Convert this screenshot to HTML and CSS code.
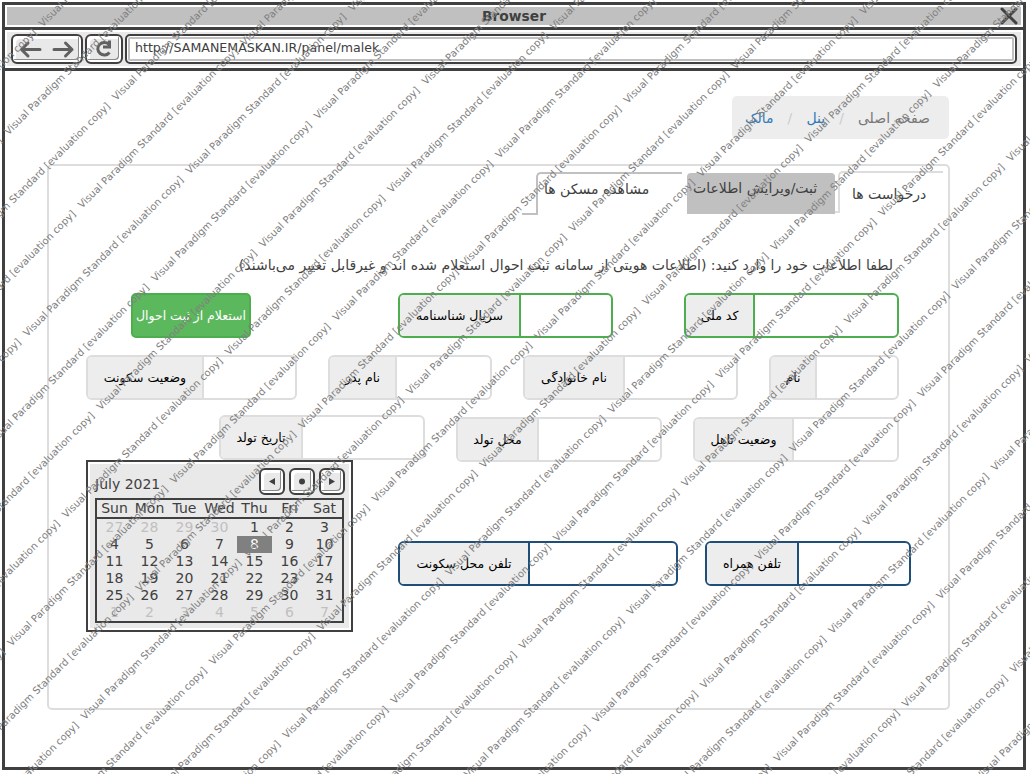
FILE: index.html
```
<!DOCTYPE html>
<html lang="fa">
<head>
<meta charset="utf-8">
<title>Browser</title>
<link rel="stylesheet" href="styles.css">
</head>
<body>
<div class="window">
  <header class="titlebar">
    <span class="title">Browser</span>
    <svg class="close" width="20" height="18" viewBox="0 0 20 18"><path d="M3 2 17 16M17 2 3 16"/></svg>
  </header>
  <div class="toolbar">
    <div class="button nav">
      <svg width="68" height="26" viewBox="0 0 68 26"><path d="M27 13.500H9M15 7 8.500 13.500l6.500 6.500M41 13.500H59M52.500 7 59 13.500l-6.500 6.500"/></svg>
    </div>
    <div class="button reload">
      <svg width="34" height="26" viewBox="0 0 34 26"><path d="M22 8.500A6.500 6.200 0 1 0 22.500 16.500M22.500 4.500v6.500H16"/></svg>
    </div>
    <div class="address"><span>http://SAMANEMASKAN.IR/panel/malek</span></div>
  </div>
  <main class="page">
    <nav class="crumbs">
      <a class="link">مالک</a><i>/</i><a class="link">پنل</a><i>/</i><a class="current">صفحه اصلی</a>
    </nav>
    <section class="panel">
      <div class="tabs">
        <span class="foot"></span>
        <div class="tab houses"><span>مشاهده مسکن ها</span></div>
        <div class="tab active"><span>ثبت/ویرایش اطلاعات</span></div>
        <span class="foot light"></span>
        <div class="tab requests"><span>درخواست ها</span></div>
      </div>
      <p class="hint" dir="rtl"><span>لطفا اطلاعات خود را وارد کنید: (اطلاعات هویتی از سامانه ثبت احوال استعلام شده اند و غیرقابل تغییر می‌باشند)</span></p>
      <div class="row identity">
        <button class="inquiry"><span>استعلام از ثبت احوال</span></button>
        <div class="field green serial"><label>سریال شناسنامه</label></div>
        <div class="field green code"><label>کد ملی</label></div>
      </div>
      <div class="row names">
        <div class="field residence"><label>وضعیت سکونت</label></div>
        <div class="field father"><label>نام پدر</label></div>
        <div class="field family"><label>نام خانوادگی</label></div>
        <div class="field first"><label>نام</label></div>
      </div>
      <div class="row birth">
        <div class="field date"><label>تاریخ تولد</label></div>
        <div class="field place"><label>محل تولد</label></div>
        <div class="field marital"><label>وضعیت تاهل</label></div>
      </div>
      <div class="row phones">
        <div class="field blue home"><label>تلفن محل سکونت</label></div>
        <div class="field blue mobile"><label>تلفن همراه</label></div>
      </div>
    </section>
  </main>
</div>
<div class="calendar">
  <div class="month">
    <span>July 2021</span>
    <div class="button step"><svg width="22" height="23" viewBox="0 0 22 23"><path d="M14 8v7L8 11.500z"/></svg></div>
    <div class="button step"><svg width="22" height="23" viewBox="0 0 22 23"><circle cx="11" cy="11.500" r="3"/></svg></div>
    <div class="button step"><svg width="22" height="23" viewBox="0 0 22 23"><path d="M8 8v7l6-3.500z"/></svg></div>
  </div>
  <div class="sheet">
    <div class="days"><b>Sun</b><b>Mon</b><b>Tue</b><b>Wed</b><b>Thu</b><b>Fri</b><b>Sat</b></div>
    <div class="dates">
      <s>27</s><s>28</s><s>29</s><s>30</s><b>1</b><b>2</b><b>3</b>
      <b>4</b><b>5</b><b>6</b><b>7</b><b class="today">8</b><b>9</b><b>10</b>
      <b>11</b><b>12</b><b>13</b><b>14</b><b>15</b><b>16</b><b>17</b>
      <b>18</b><b>19</b><b>20</b><b>21</b><b>22</b><b>23</b><b>24</b>
      <b>25</b><b>26</b><b>27</b><b>28</b><b>29</b><b>30</b><b>31</b>
      <s>1</s><s>2</s><s>3</s><s>4</s><s>5</s><s>6</s><s>7</s>
    </div>
  </div>
</div>
<svg class="watermark" width="1030" height="774"><g id="marks" transform="translate(42.8 27.5) rotate(-45)"></g></svg>
<script src="watermark.js"></script>
</body>
</html>
```
FILE: styles.css
```
* { box-sizing: border-box; }
body {
  margin: 0;
  width: 1030px;
  height: 774px;
  overflow: hidden;
  background: #fff;
  color: #404040;
  font-family: "DejaVu Sans", sans-serif;
  font-size: 14px;
}
svg { display: block; }
.window {
  width: 1024px;
  height: 768px;
  margin: 2px 0 0 2px;
  border: 3px solid #404040;
  display: flex;
  flex-direction: column;
}
.titlebar {
  flex: none;
  height: 25px;
  border-bottom: 3px solid #404040;
  background: #c0c0c0;
  box-shadow: inset 0 0 0 2px #fff;
  display: grid;
  grid-template-columns: 1fr 20px;
  align-items: center;
  padding: 0 4px 0 0;
}
.title {
  text-align: center;
  font-size: 13.8px;
  font-weight: bold;
  line-height: 18px;
  padding-left: 24px;
}
.close path { stroke: #404040; stroke-width: 3; stroke-linecap: round; fill: none; }
.toolbar {
  flex: none;
  height: 41px;
  border-bottom: 3px solid #404040;
  background: #e9e9e9;
  box-shadow: inset 0 0 0 2px #fff;
  padding: 4px 6px;
  display: flex;
  gap: 2px;
}
.button {
  height: 30px;
  border: 2px solid #404040;
  border-radius: 6px;
  background: #e9e9e9;
  box-shadow: inset 1px 1px 0 0 #fff, inset -2px -2px 0 0 #fff, inset -3px -3px 0 0 #8a8a8a, inset 3px 3px 0 0 #fff;
}
.button path { fill: none; stroke: #606060; stroke-width: 3; stroke-linecap: round; stroke-linejoin: round; }
.nav { width: 72px; }
.reload { width: 38px; }
.reload path { stroke-linecap: butt; stroke-linejoin: miter; }
.address {
  flex: 1;
  height: 30px;
  border: 2px solid #404040;
  border-radius: 5px;
  box-shadow: inset 0 0 0 1px #fff, inset 0 0 0 3px #c0c0c0;
  background: #fff;
  padding: 0 8px;
  font-size: 12.6px;
  line-height: 24px;
}
.page {
  flex: 1;
  display: flex;
  flex-direction: column;
  padding: 25px 74px 0 42px;
}
.crumbs {
  align-self: flex-end;
  flex: none;
  width: 217px;
  height: 43px;
  border-radius: 5px;
  background: #ededed;
  display: flex;
  align-items: center;
  padding: 0 19px 0 13px;
  font-size: 14px;
  white-space: nowrap;
}
.crumbs i { font-style: normal; color: #ccc; flex: 0 1 34px; min-width: 0; text-align: center; }
.crumbs .link { color: #337ab7; flex: none; }
.crumbs .current { color: #777; margin-left: auto; flex: none; }
.panel {
  flex: none;
  height: 546px;
  width: 903px;
  margin-top: 25px;
  border: 2px solid #ddd;
  border-radius: 5px;
  display: flex;
  flex-direction: column;
}
.tabs { display: flex; height: 50px; padding: 5px 0 0 473px; align-items: flex-start; }
.foot { width: 14px; height: 44px; border-bottom: 2px solid #c0c0c0; }
.foot.light { width: 3px; height: 42px; border-color: #ddd; }
.tab { white-space: nowrap; }
.houses {
  width: 146px;
  height: 43px;
  margin: 1px 5px 0 0;
  border-top: 2px solid #c0c0c0;
  border-left: 2px solid #c0c0c0;
  border-top-left-radius: 5px;
  line-height: 31px;
  padding-left: 6px;
}
.active {
  width: 148px;
  height: 41px;
  margin-top: 2px;
  background: #c0c0c0;
  border-radius: 4px 4px 0 0;
  line-height: 31px;
  padding-left: 6px;
}
.requests {
  width: 105px;
  height: 42px;
  border-top: 2px solid #ddd;
  border-left: 2px solid #ddd;
  border-top-left-radius: 5px;
  line-height: 42px;
  padding-left: 12px;
}
.hint { margin: 39px 55px 0 0; height: 20px; line-height: 20px; white-space: nowrap; }
.row { display: flex; height: 45px; flex: none; }
.field {
  border: 2px solid #ddd;
  border-radius: 6px;
  height: 45px;
  display: flex;
  color: #000;
  font-size: 12.5px;
  background: #fff;
}
.field label {
  background: #ededed;
  border-right: 2px solid #ddd;
  border-radius: 4px 0 0 4px;
  display: flex;
  align-items: center;
  justify-content: center;
  white-space: nowrap;
}
.green, .green label { border-color: #4cae4c; }
.blue, .blue label { border-color: #1f4e79; }
.identity { margin-top: 18px; padding-left: 82px; }
.inquiry {
  width: 120px;
  height: 45px;
  padding: 0;
  border: 2px solid #4cae4c;
  border-radius: 5px;
  background: #5cb85c;
  color: #fff;
  font: 12.5px "DejaVu Sans", sans-serif;
  white-space: nowrap;
}
.serial { width: 215px; margin-left: 147px; }
.serial label { width: 121px; }
.code { width: 215px; margin-left: 71px; }
.code label { width: 69px; }
.names { margin-top: 17px; padding-left: 37px; }
.residence { width: 211px; }
.residence label { width: 116px; }
.father { width: 164px; margin-left: 31px; }
.father label { width: 67px; }
.family { width: 215px; margin-left: 31px; }
.family label { width: 100px; }
.first { width: 130px; margin-left: 31px; }
.first label { width: 46px; }
.birth { margin-top: 15px; height: 47px; padding-left: 170px; align-items: flex-end; }
.date { width: 206px; align-self: flex-start; }
.date label { width: 82px; }
.place { width: 206px; margin-left: 31px; }
.place label { width: 81px; }
.marital { width: 206px; margin-left: 31px; }
.marital label { width: 99px; }
.phones { margin-top: 79px; padding-left: 349px; }
.home { width: 280px; }
.home label { width: 130px; }
.mobile { width: 206px; margin-left: 27px; }
.mobile label { width: 92px; }
.calendar {
  position: absolute;
  left: 86px;
  top: 460px;
  width: 267px;
  height: 172px;
  border: 2px solid #404040;
  background: #e9e9e9;
  box-shadow: inset 0 0 0 2px #fff;
  padding: 6px 6px 0 7px;
}
.month { display: flex; gap: 4px; height: 30px; }
.month span { flex: 1; line-height: 33px; }
.step { width: 26px; height: 27px; }
.step path, .step circle { fill: #404040; stroke: none; }
.sheet { width: 249px; height: 125px; border: 2px solid #404040; }
.days, .dates { display: grid; grid-template-columns: repeat(7, 35px); grid-auto-rows: 17px; text-align: center; line-height: 17px; }
.days { height: 19px; border-bottom: 2px solid #404040; line-height: 16px; }
.sheet b { font-weight: normal; }
.sheet s { text-decoration: none; color: #c0c0c0; }
.sheet .today { background: #808080; color: #fff; }
.watermark { position: absolute; left: 0; top: 0; pointer-events: none; }
.watermark text { font-size: 10px; fill: #808080; }
```
FILE: watermark.js
```
const group = document.getElementById("marks");
const period = 230;
const spacing = 51.97;
for (let row = -3; row < 24; row++) {
  const shift = row % 2 ? 129.4 : 0;
  for (let col = -5; col < 6; col++) {
    const u = col * period + shift;
    const v = row * spacing;
    const x = 42.8 + (u + v) * Math.SQRT1_2;
    const y = 27.5 + (v - u) * Math.SQRT1_2;
    if (x > 1030 || x < -170 || y < -10 || y > 940) continue;
    const text = document.createElementNS("http://www.w3.org/2000/svg", "text");
    text.setAttribute("x", u);
    text.setAttribute("y", v);
    text.setAttribute("textLength", 222);
    text.textContent = "Visual Paradigm Standard [evaluation copy]";
    group.appendChild(text);
  }
}
```
